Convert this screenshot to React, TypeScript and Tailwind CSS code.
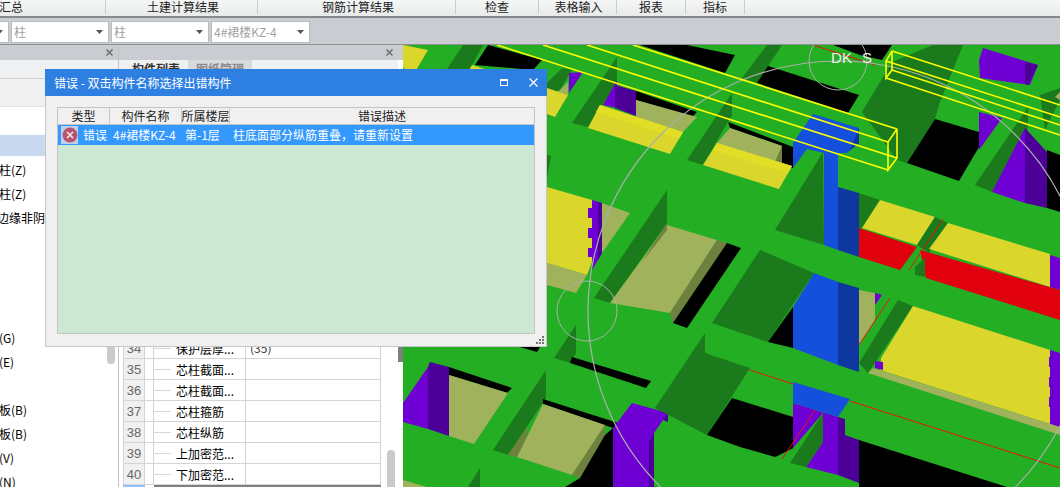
import React from "react";

const G = "#24ae24";
const DG = "#1b7a1b";
const BK = "#000000";
const YL = "#dbd62c";
const YH = "#e2de26";
const OL = "#a0b25c";
const DO = "#70803f";
const PU = "#6f00d4";
const DP = "#4c0098";
const BL = "#1550dc";
const DB = "#0e38a0";
const RD = "#e0000e";

const shapes: [string, string][] = [
  // top left slabs
  [YL, "403,45 428,50 415,72 403,68"],
  [DG, "447,69 463,45 483,45 470,69"],
  [BK, "488,45 542,60 533,70 475,65"],
  [YL, "472,65 488,70 484,75 468,72"],
  [DG, "547,83 562,68 572,70 560,90 547,95"],
  [OL, "558,92 568,82 568,95"],
  [YL, "547,88 568,95 555,117 547,114"],
  [PU, "569,73 583,72 569,93"],
  [DG, "572,123 617,57 617,83 588,127"],
  [DG, "547,155 551,156 547,178"],
  [PU, "603,105 617,80 617,108"],
  [DP, "615,85 636,91 636,116 615,108"],
  [BK, "636,91 697,112 692,117 636,100"],
  [OL, "636,100 697,117 683,132 636,117"],
  [YL, "600,105 683,132 670,154 588,128"],
  [YH, "600,105 683,132 679,139 596,112"],
  [BK, "640,45 687,45 735,55 725,73"],
  [DG, "687,160 732,93 732,115 703,165"],
  [DG, "742,78 767,45 782,45 757,83"],
  // mid slabs behind the box
  [BK, "728,122 793,147 793,168 782,165 782,146 730,128"],
  [OL, "730,128 782,146 775,162 717,143"],
  [DO, "782,146 782,165 775,162"],
  [YL, "717,143 792,166 779,189 703,165"],
  [YH, "717,143 792,166 788,173 713,150"],
  [BK, "768,66 859,95 848,113 757,83"],
  [BK, "833,45 892,45 882,60 860,55"],
  // column head
  [BL, "813,114 859,128 859,143 847,153 838,153 838,250 824,245 824,153 807,149 793,168 793,143"],
  [DB, "838,187 859,193 859,257 838,250"],
  [DB, "859,128 859,143 850,150"],
  [DG, "823,152 775,230 824,245"],
  [DG, "859,193 880,200 862,228 859,228"],
  // big dark + hole upper right
  [DG, "862,112 892,62 933,45 963,45 940,102 935,119 907,163 897,160"],
  [BK, "907,163 935,119 979,132 979,147 959,181"],
  [PU, "983,48 1038,65 1030,85 980,78 979,60"],
  [DP, "1025,62 1038,65 1028,85 1025,84"],
  [PU, "979,112 1002,118 979,150"],
  [DG, "975,185 1028,107 1028,128 992,192"],
  [PU, "1025,128 1025,203 992,192"],
  [DP, "1025,128 1047,152 1047,208 1025,203"],
  [BK, "1047,150 1060,155 1060,212 1047,208"],
  [DG, "1040,95 1060,88 1060,100 1045,130"],
  [OL, "1055,97 1060,92 1060,100"],
  // yellow + red above the upper band
  [YL, "880,200 935,217 917,245 862,228"],
  [RD, "859,228 917,247 900,270 859,257"],
  [DG, "935,217 948,223 929,253 917,245"],
  [YL, "948,223 1050,254 1050,287 929,249"],
  [PU, "1050,255 1060,258 1060,290 1050,287"],
  [RD, "920,250 1060,290 1060,320 926,278"],
  [DG, "915,267 925,258 925,277 915,275"],
  // left middle slab
  [YL, "547,187 592,200 592,262 587,275 547,263"],
  [OL, "547,263 587,275 576,293 547,285"],
  [PU, "592,200 602,203 602,253 592,270"],
  [DP, "598,202 602,203 602,253 598,260"],
  [PU, "588,208 592,208 592,218 588,218"],
  [PU, "588,228 592,228 592,238 588,238"],
  [PU, "588,248 592,248 592,257 588,257"],
  [OL, "602,203 630,213 602,253"],
  [DG, "594,298 667,190 667,223 610,303"],
  [OL, "667,225 717,240 670,313 610,303"],
  [DO, "642,262 667,223 667,230"],
  [DO, "717,240 727,243 673,323 670,313"],
  [BK, "727,243 741,248 687,328 673,323"],
  // below the dialog
  [BK, "520,347 537,352 540,347"],
  [DG, "554,358 576,325 576,353 570,363"],
  [BK, "572,357 651,381 646,388 570,363"],
  [PU, "403,403 428,367 428,429 403,422"],
  [DP, "430,362 449,367 449,436 428,429 428,367"],
  [BK, "449,367 512,388 507,393 449,375"],
  [OL, "449,375 508,393 474,444 449,436"],
  [DG, "493,450 546,370 546,398 508,455"],
  [DO, "508,455 527,427 527,437 517,457"],
  [BK, "543,399 618,423 613,428 543,404"],
  [OL, "543,404 605,425 572,475 517,457 527,437"],
  [DO, "605,425 605,435 580,478 572,475"],
  [BK, "605,435 613,428 613,487 565,487 580,478"],
  [PU, "613,428 632,403 668,413 654,433 654,487 613,487"],
  [DP, "649,442 654,433 654,487 649,487"],
  [DP, "668,413 668,422 663,420"],
  [DG, "655,408 705,333 705,353 750,368 707,435"],
  [BK, "707,435 732,398 793,417 793,448 775,457 740,447"],
  [DG, "712,323 760,250 814,273 768,342"],
  [DG, "468,487 480,468 480,487"],
  [OL, "403,480 427,487 403,487"],
  // lower centre column
  [BK, "768,342 793,307 793,348"],
  [BL, "793,307 814,273 838,282 838,365 793,348"],
  [DB, "838,282 859,288 859,372 838,365"],
  [OL, "859,290 875,293 875,320 859,345"],
  [PU, "875,293 882,295 875,305"],
  [DG, "859,363 898,300 913,306 868,373"],
  [YL, "913,306 1050,350 1050,424 880,370 881,358"],
  [PU, "875,361 883,362 883,370 875,368"],
  [PU, "1050,350 1060,353 1060,428 1050,425"],
  [PU, "1049,357 1052,357 1052,367 1049,367"],
  [PU, "1049,377 1052,377 1052,387 1049,387"],
  [PU, "1049,397 1052,397 1052,407 1049,407"],
  [OL, "873,368 1060,427 1060,435 868,373"],
  // under the lower band
  [PU, "793,403 838,417 838,475 806,467 823,442 823,413 793,448"],
  [DP, "838,417 845,419 845,435 859,440 859,483 838,475"],
  [DG, "790,463 823,413 823,442 806,467"],
  [BK, "859,440 1007,487 859,487"],
  [BL, "793,382 850,399 838,417 793,403"],
  [BK, "793,448 793,417 775,457"],
];

const redLines: [number, number, number, number][] = [
  [943, 219, 909, 270],
  [890, 298, 859, 345],
  [815, 410, 782, 459],
  [750, 370, 793, 384],
  [850, 401, 1060, 468],
  [813, 45, 875, 65],
];

const yellowLines: string[] = [
  "633,45 897,129",
  "587,45 888,142",
  "543,45 897,158",
  "497,45 888,170",
  "897,129 888,142 888,170 897,158 897,129",
  "892,51 1060,105",
  "886,61 1060,117",
  "892,70 1060,125",
  "886,78 1060,135",
  "892,51 886,61 886,78 892,70 892,51",
];

const navTabs = [
  { label: "汇总", width: "w-[107px]", align: "justify-start -ml-[1px] pl-0" },
  { label: "土建计算结果", width: "w-[152px]", align: "justify-center pl-[3px]" },
  { label: "钢筋计算结果", width: "w-[198px]", align: "justify-center pl-[3px]" },
  { label: "检查", width: "w-[83px]", align: "justify-center" },
  { label: "表格输入", width: "w-[78px]", align: "justify-center pl-[2px]" },
  { label: "报表", width: "w-[69px]", align: "justify-center" },
  { label: "指标", width: "w-[59px]", align: "justify-center" },
];

const leftRows = [
  "",
  "柱(Z)",
  "柱(Z)",
  "边缘非阴",
  "",
  "",
  "",
  "",
  "(G)",
  "(E)",
  "",
  "板(B)",
  "板(B)",
  "(V)",
  "(N)",
];

const propRows = [
  { no: 34, name: "保护层厚...", value: "(35)" },
  { no: 35, name: "芯柱截面...", value: "" },
  { no: 36, name: "芯柱截面...", value: "" },
  { no: 37, name: "芯柱箍筋", value: "" },
  { no: 38, name: "芯柱纵筋", value: "" },
  { no: 39, name: "上加密范...", value: "" },
  { no: 40, name: "下加密范...", value: "" },
];

function Caret() {
  return (
    <svg width="7" height="4" viewBox="0 0 7 4" className="shrink-0">
      <path d="M0 0h7L3.5 4z" fill="#555" />
    </svg>
  );
}

function Combo({ label, width }: { label: string; width: string }) {
  return (
    <div
      className={`${width} h-[22px] flex items-center justify-between bg-white border border-[#b9bcc0] pl-[2px] pr-[5px] text-[12px] text-[#a2a2a2] overflow-hidden`}
    >
      <span>{label}</span>
      <Caret />
    </div>
  );
}

function CloseMark() {
  return (
    <svg width="7" height="7" viewBox="0 0 7 7">
      <path d="M0.5 0.5l6 6M6.5 0.5l-6 6" stroke="#666" strokeWidth="1.3" />
    </svg>
  );
}

function Model() {
  return (
    <svg viewBox="403 45 657 442" className="w-[657px] h-[442px] block" style={{ backgroundColor: G }}>
      {shapes.map(([fill, points], i) => (
        <polygon key={i} fill={fill} points={points} />
      ))}
      {redLines.map(([x1, y1, x2, y2], i) => (
        <line key={i} x1={x1} y1={y1} x2={x2} y2={y2} stroke="#e8140c" strokeWidth="1" />
      ))}
      <circle cx="838" cy="311" r="250" fill="none" stroke="#aab0aa" strokeWidth="1.2" />
      <circle cx="838" cy="61" r="29" fill="none" stroke="#aab0aa" strokeWidth="1" />
      <circle cx="587" cy="311" r="30" fill="none" stroke="#aab0aa" strokeWidth="1" />
      {yellowLines.map((points, i) => (
        <polyline key={i} points={points} fill="none" stroke="#ffff00" strokeWidth="1.6" />
      ))}
      <text x="831 842 862" y="63" fill="#f2f2f2" fontSize="15" fontFamily="'Liberation Sans', sans-serif">
        DKS
      </text>
    </svg>
  );
}

function ErrorDialog() {
  return (
    <div className="absolute left-[45px] top-[69px] w-[502px] h-[278px] bg-[#f0f0f0] border-r border-b border-l border-[#c4c8cc] flex flex-col">
      <div className="h-[27px] -ml-px -mr-px shrink-0 bg-[#2e7fe2] text-white text-[12px] flex items-center justify-between pl-[9px] pr-[9px]">
        <span>错误 - 双击构件名称选择出错构件</span>
        <div className="flex items-center gap-[20px]">
          <svg width="9" height="7" viewBox="0 0 9 7">
            <rect x="0.5" y="0.5" width="7" height="6" fill="none" stroke="#fff" />
            <rect x="0.5" y="0.5" width="7" height="1.5" fill="#fff" />
          </svg>
          <svg width="9" height="9" viewBox="0 0 9 9">
            <path d="M0.5 0.5l8 8M8.5 0.5l-8 8" stroke="#fff" strokeWidth="1.2" />
          </svg>
        </div>
      </div>
      <div className="ml-[11px] mt-[11px] w-[478px] h-[227px] border-t-0 border border-[#c2c4c6] flex flex-col">
        <div className="h-[18px] shrink-0 flex border-t border-b border-[#c2c4c6] bg-[#f0f0f0] text-[12px] leading-[16px] text-[#222] whitespace-nowrap">
          <div className="w-[52px] text-center border-r border-[#c8c8c8]">类型</div>
          <div className="w-[72px] text-center border-r border-[#c8c8c8]">构件名称</div>
          <div className="w-[48px] flex justify-center border-r border-[#c8c8c8]">所属楼层</div>
          <div className="flex-1 text-center">错误描述</div>
        </div>
        <div className="h-[20px] shrink-0 bg-[#3399ff] text-white text-[12px] flex items-center whitespace-nowrap">
          <div className="w-[25px] h-[18px] pl-[3px] shrink-0 flex items-center">
            <div className="bg-[#bdd0e8] w-[17px] h-[18px] flex items-center justify-center">
              <svg width="16" height="16" viewBox="0 0 16 16">
                <circle cx="8" cy="8" r="7.5" fill="#b5566e" />
                <path d="M5 5l6 6M11 5l-6 6" stroke="#f4e8ea" strokeWidth="1.6" />
              </svg>
            </div>
          </div>
          <span className="w-[30px] shrink-0">错误</span>
          <span className="w-[72px] shrink-0">4#裙楼KZ-4</span>
          <span className="w-[48px] shrink-0">第-1层</span>
          <span>柱底面部分纵筋重叠，请重新设置</span>
        </div>
        <div className="flex-1 bg-[#cde8d2]" />
      </div>
      <svg width="10" height="10" viewBox="0 0 10 10" className="absolute right-[1px] bottom-[1px]">
        <path d="M7 1h2v2H7zM4 4h2v2H4zM7 4h2v2H7zM1 7h2v2H1zM4 7h2v2H4zM7 7h2v2H7z" fill="#6f7378" />
      </svg>
    </div>
  );
}

export default function App() {
  return (
    <div className="relative w-[1060px] h-[487px] overflow-hidden bg-white flex flex-col font-['Noto_Sans_CJK_SC','Liberation_Sans',sans-serif]">
      {/* nav strip */}
      <div className="h-[18px] shrink-0 flex bg-gradient-to-b from-[#f5f7f7] to-[#e9ebeb] border-b-2 border-[#85888c] text-[12px] leading-none text-[#222]">
        {navTabs.map((tab) => (
          <div
            key={tab.label}
            className={`${tab.width} ${tab.align} h-[14px] flex items-center border-r border-[#c9cccc]`}
          >
            <span>{tab.label}</span>
          </div>
        ))}
      </div>

      {/* combo row */}
      <div className="h-[27px] shrink-0 bg-[#c9ccd1] border-b border-[#8e9094] flex items-center gap-[2px] -ml-[89px] pt-[1px]">
        <Combo label="" width="w-[98px]" />
        <Combo label="柱" width="w-[98px]" />
        <Combo label="柱" width="w-[98px]" />
        <Combo label="4#裙楼KZ-4" width="w-[99px]" />
      </div>

      <div className="flex-1 flex min-h-0">
        {/* left panel */}
        <div className="relative w-[119px] shrink-0 bg-white border-r border-[#c0c2c6] flex flex-col overflow-hidden">
          <div className="h-[15px] shrink-0 bg-[#c9ccd1] flex items-center justify-end pr-[5px]">
            <CloseMark />
          </div>
          <div className="h-[19px] shrink-0 bg-[#eef0f2] border-b border-[#d0d2d4]" />
          <div className="h-[28px] shrink-0 bg-[#f0f0f0] border-b border-[#e0e0e0]" />
          <div className="h-[27px] shrink-0" />
          {leftRows.map((row, i) => (
            <div
              key={i}
              className={`h-[24px] shrink-0 flex items-center text-[12px] text-black ${
                i === 0 ? "bg-[linear-gradient(#fff_0,#fff_1px,#c8d9f0_1px,#c8d9f0_22px,#fff_22px)]" : ""
              }`}
            >
              <span className={i === 3 ? "-ml-[3px]" : "-ml-[1px]"}>{row}</span>
            </div>
          ))}
          <div className="absolute left-[107px] top-[260px] w-[8px] h-[59px] rounded-[4px] bg-[#cacaca]" />
        </div>

        {/* properties panel */}
        <div className="relative w-[279px] shrink-0 bg-white flex flex-col overflow-hidden">
          <div className="h-[15px] shrink-0 bg-[#c9ccd1] flex items-center justify-end pr-[5px]">
            <CloseMark />
          </div>
          <div className="h-[17px] shrink-0 bg-[#eef0f2] flex pl-[5px] text-[12px] font-bold whitespace-nowrap">
            <div className="w-[64px] text-center text-[#333] bg-[#f0f0f0]">构件列表</div>
            <div className="w-[64px] text-center text-[#8a8a8a] bg-[#d9dadc]">图纸管理</div>
          </div>
          <div className="h-[261px] shrink-0" />
          {propRows.map((row) => (
            <div key={row.no} className="h-[21px] shrink-0 ml-[4px] w-[258px] flex border-b border-[#d4d4d4] text-[12px]">
              <div className="w-[22px] shrink-0 bg-[#f0f0f0] border-r border-l border-[#d4d4d4] text-center text-[13px] leading-[22px] text-[#666] font-['Liberation_Sans',sans-serif]">
                {row.no}
              </div>
              <div className="w-[9px] shrink-0 border-r border-[#d4d4d4]" />
              <div className="w-[92px] shrink-0 border-r border-[#d4d4d4] flex items-center text-black">
                <span className="w-[17px] h-px bg-[#d8d8d8] shrink-0" />
                <span className="ml-[5px] pt-[2px] whitespace-nowrap">{row.name}</span>
              </div>
              <div className="flex-1 border-r border-[#d4d4d4] pl-[4px] leading-[20px] text-[#333]">{row.value}</div>
            </div>
          ))}
          <div className="h-[3px] shrink-0 ml-[4px] w-[258px] flex">
            <div className="w-[22px] bg-[#8fc2ff]" />
            <div className="w-[9px]" />
            <div className="flex-1 bg-[#808080]" />
          </div>
          <div className="absolute right-[3px] top-[405px] w-[8px] h-[40px] rounded-[4px] bg-[#cacaca]" />
        </div>

        {/* gutter */}
        <div className="w-[5px] shrink-0 bg-white flex flex-col">
          <div className="h-[15px] shrink-0 bg-[#c9ccd1]" />
          <div className="h-[9px] shrink-0" />
          <div className="h-[293px] shrink-0 bg-[#808080]" />
        </div>

        <div className="flex-1 min-w-0 overflow-hidden">
          <Model />
        </div>
      </div>

      <ErrorDialog />
    </div>
  );
}
